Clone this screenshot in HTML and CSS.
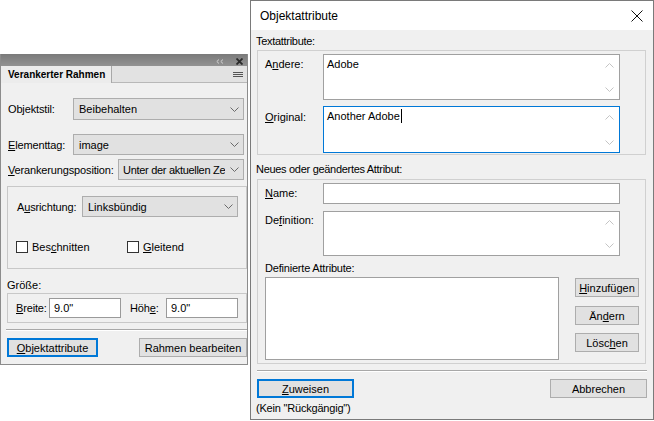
FILE: index.html
```html
<!DOCTYPE html>
<html>
<head>
<meta charset="utf-8">
<link rel="stylesheet" href="styles.css">
</head>
<body>
<div class="desk">

  <section class="panel">
    <div class="phead">
      <svg class="pcoll" width="8" height="5" viewBox="0 0 8 5"><path d="M3 0.5 L0.8 2.5 L3 4.5 M7 0.5 L4.8 2.5 L7 4.5" fill="none" stroke="#d0d0d0" stroke-width="1"/></svg>
      <svg class="pclose" width="7" height="7" viewBox="0 0 7 7"><path d="M0.5 0.5 L6.5 6.5 M6.5 0.5 L0.5 6.5" fill="none" stroke="#2a2a2a" stroke-width="1.8"/></svg>
    </div>
    <div class="ptabs">
      <div class="ptab">Verankerter Rahmen</div>
      <div class="pmenu"><span></span><span></span><span></span></div>
    </div>
    <div class="pbody">
      <div class="prow r1">
        <label class="plabel w66">Objektstil:</label>
        <div class="select w171"><span>Beibehalten</span><svg width="9" height="5" viewBox="0 0 9 5"><path d="M0.5 0.5 L4.5 4.5 L8.5 0.5" fill="none" stroke="#6a6a6a"/></svg></div>
      </div>
      <div class="prow r2">
        <label class="plabel w66"><u>E</u>lementtag:</label>
        <div class="select w171"><span>image</span><svg width="9" height="5" viewBox="0 0 9 5"><path d="M0.5 0.5 L4.5 4.5 L8.5 0.5" fill="none" stroke="#6a6a6a"/></svg></div>
      </div>
      <div class="prow r3">
        <label class="plabel w111"><u>V</u>erankerungsposition:</label>
        <div class="select w126 tight"><span>Unter der aktuellen Ze</span><svg width="9" height="5" viewBox="0 0 9 5"><path d="M0.5 0.5 L4.5 4.5 L8.5 0.5" fill="none" stroke="#6a6a6a"/></svg></div>
      </div>
      <div class="pgroup">
        <div class="prow ralign">
          <label class="plabel w66">A<u>u</u>srichtung:</label>
          <div class="select w155"><span>Linksbündig</span><svg width="9" height="5" viewBox="0 0 9 5"><path d="M0.5 0.5 L4.5 4.5 L8.5 0.5" fill="none" stroke="#6a6a6a"/></svg></div>
        </div>
        <div class="checks">
          <div class="check c1"><span class="box"></span><span>Bes<u>c</u>hnitten</span></div>
          <div class="check"><span class="box"></span><span><u>G</u>leitend</span></div>
        </div>
      </div>
      <div class="glabel">Größe:</div>
      <div class="sizebox">
        <label class="plabel w34"><u>B</u>reite:</label>
        <div class="input w72">9.0"</div>
        <label class="plabel w37 hl">Höh<u>e</u>:</label>
        <div class="input w72">9.0"</div>
      </div>
      <div class="sep psep"></div>
      <div class="pbtns">
        <div class="btn default w91"><u>O</u>bjektattribute</div>
        <div class="btn w107">Rahmen bearbeiten</div>
      </div>
    </div>
  </section>

  <section class="dialog">
    <header class="dtitle">
      <span>Objektattribute</span>
      <svg class="dclose" width="12" height="12" viewBox="0 0 12 12"><path d="M0.5 0.5 L11.5 11.5 M11.5 0.5 L0.5 11.5" fill="none" stroke="#111" stroke-width="1"/></svg>
    </header>
    <div class="dbody">
      <div class="dhead h1">Textattribute:</div>
      <div class="dgroup g1">
        <div class="drow">
          <label class="dlabel l1">A<u>n</u>dere:</label>
          <div class="tarea t1"><span class="ttext">Adobe</span>
            <div class="scroll">
              <svg width="9" height="5" viewBox="0 0 9 5"><path d="M0.5 4.5 L4.5 0.5 L8.5 4.5" fill="none" stroke="#c4c4c4"/></svg>
              <svg width="9" height="5" viewBox="0 0 9 5"><path d="M0.5 0.5 L4.5 4.5 L8.5 0.5" fill="none" stroke="#c4c4c4"/></svg>
            </div>
          </div>
        </div>
        <div class="drow mt6">
          <label class="dlabel l2"><u>O</u>riginal:</label>
          <div class="tarea t2 focus"><span class="ttext">Another Adobe<i class="caret"></i></span>
            <div class="scroll">
              <svg width="9" height="5" viewBox="0 0 9 5"><path d="M0.5 4.5 L4.5 0.5 L8.5 4.5" fill="none" stroke="#c4c4c4"/></svg>
              <svg width="9" height="5" viewBox="0 0 9 5"><path d="M0.5 0.5 L4.5 4.5 L8.5 0.5" fill="none" stroke="#c4c4c4"/></svg>
            </div>
          </div>
        </div>
      </div>
      <div class="dhead h2">Neues oder geändertes Attribut:</div>
      <div class="dgroup g2">
        <div class="drow">
          <label class="dlabel l3"><u>N</u>ame:</label>
          <div class="dinput"></div>
        </div>
        <div class="drow mt7">
          <label class="dlabel l4">De<u>f</u>inition:</label>
          <div class="tarea t3"><span class="ttext"></span>
            <div class="scroll">
              <svg width="9" height="5" viewBox="0 0 9 5"><path d="M0.5 4.5 L4.5 0.5 L8.5 4.5" fill="none" stroke="#c4c4c4"/></svg>
              <svg width="9" height="5" viewBox="0 0 9 5"><path d="M0.5 0.5 L4.5 4.5 L8.5 0.5" fill="none" stroke="#c4c4c4"/></svg>
            </div>
          </div>
        </div>
        <div class="dsub">Definierte Attribute:</div>
        <div class="listrow">
          <div class="listbox"></div>
          <div class="sidebtns">
            <div class="btn sbtn"><u>H</u>inzufügen</div>
            <div class="btn sbtn">Än<u>d</u>ern</div>
            <div class="btn sbtn">Lösc<u>h</u>en</div>
          </div>
        </div>
      </div>
      <div class="sep dsep"></div>
      <div class="dbtns">
        <div class="btn default w97"><u>Z</u>uweisen</div>
        <div class="btn w97">Abbrechen</div>
      </div>
      <div class="note">(Kein "Rückgängig")</div>
    </div>
  </section>

</div>
</body>
</html>
```

FILE: styles.css
```css
* { box-sizing: border-box; }
html, body { margin: 0; padding: 0; }
body {
  background: #ffffff;
  font-family: "Liberation Sans", Arial, sans-serif;
  font-size: 11px;
  color: #000;
}
u { text-decoration: underline; text-underline-offset: 1px; }
.desk { position: relative; width: 654px; height: 421px; overflow: hidden; }

/* ---------- floating panel ---------- */
.panel {
  position: absolute;
  left: 0; top: 54px;
  width: 248px; height: 311px;
  background: #f0f0f0;
  border: 1px solid #8c8c8c;
  border-top: none;
  display: flex; flex-direction: column;
}
.phead {
  height: 12px;
  background: linear-gradient(#7a7a7a, #929292);
  display: flex; align-items: center; justify-content: flex-end;
  gap: 12px; padding-right: 4px;
}
.pcoll { margin-top: 2px; }
.pclose { margin-top: 2px; }
.ptabs {
  height: 17px;
  background: #e2e2e2;
  display: flex; align-items: stretch;
  border-bottom: 1px solid #b8b8b8;
}
.ptab {
  width: 111px;
  background: #ececec;
  border-right: 1px solid #a8a8a8;
  margin-bottom: -1px;
  font-weight: bold; font-size: 10px;
  padding-left: 7px;
  display: flex; align-items: center;
}
.pmenu {
  margin-left: auto; margin-right: 4px;
  width: 10px;
  display: flex; flex-direction: column; justify-content: center; gap: 1px;
}
.pmenu span { height: 1px; background: #555; display: block; }
.pbody {
  padding-left: 6px;
  display: flex; flex-direction: column;
}
.prow { display: flex; align-items: center; }
.r1 { margin-top: 15px; height: 22px; }
.r2 { margin-top: 14px; height: 21px; }
.r3 { margin-top: 4px; height: 21px; }
.plabel { display: block; padding-left: 1px; letter-spacing: -0.15px; white-space: nowrap; }
.w66 { width: 66px; }
.w111 { width: 111px; }
.w34 { width: 34px; }
.w37 { width: 37px; }
.hl { margin-left: 8px; }
.select {
  height: 100%;
  background: #e1e1e1;
  border: 1px solid #adadad;
  display: flex; align-items: center; justify-content: space-between;
  padding: 0 4px 0 5px;
  white-space: nowrap; overflow: hidden;
}
.select span { overflow: hidden; }
.select svg { flex: none; margin-left: 4px; }
.select.tight { padding-left: 4px; }
.select.tight span { letter-spacing: -0.3px; }
.select.tight svg { margin-left: 2px; }
.w171 { width: 171px; }
.w126 { width: 126px; }
.w155 { width: 156px; }
.pgroup {
  margin-top: 6px;
  width: 240px; height: 83px;
  border: 1px solid #c8c8c8;
  padding: 9px 0 0 8px;
}
.ralign { height: 21px; }
.checks { display: flex; margin-top: 23px; height: 13px; align-items: center; }
.check { display: flex; align-items: center; gap: 4px; }
.c1 { width: 111px; }
.box {
  width: 12px; height: 12px;
  background: #fff; border: 1px solid #333;
  display: block;
}
.glabel { margin-top: 9px; height: 14px; line-height: 14px; }
.sizebox {
  margin-top: 1px;
  width: 240px; height: 30px;
  border: 1px solid #c8c8c8;
  padding: 4px 0 0 7px;
  display: flex; align-items: flex-start;
}
.sizebox .plabel { line-height: 20px; }
.input {
  height: 20px;
  background: #fff;
  border: 1px solid #9a9a9a;
  padding: 0 4px; line-height: 18px;
}
.w72 { width: 72px; }
.sep { height: 2px; border-top: 1px solid #a8a8a8; border-bottom: 1px solid #ffffff; }
.psep { margin-top: 6px; width: 241px; margin-left: -1px; }
.pbtns {
  margin-top: 7px;
  width: 240px;
  display: flex; justify-content: space-between;
}
.btn {
  height: 19px;
  background: #e1e1e1;
  border: 1px solid #adadad;
  display: flex; align-items: center; justify-content: center;
  white-space: nowrap;
}
.btn.default { border: 2px solid #0078d7; }
.w91 { width: 91px; }
.w107 { width: 108px; }

/* ---------- dialog ---------- */
.dialog {
  position: absolute;
  left: 250px; top: 0;
  width: 404px; height: 420px;
  border: 1px solid #7a7a7a;
  background: #f0f0f0;
  display: flex; flex-direction: column;
}
.dtitle {
  height: 29px;
  background: #fff;
  display: flex; align-items: center; justify-content: space-between;
  padding: 0 10px 0 9px;
  font-size: 12px;
}
.dbody { padding: 0 7px 0 5px; display: flex; flex-direction: column; }
.dhead { height: 14px; line-height: 14px; letter-spacing: -0.3px; }
.h1 { margin-top: 4px; }
.h2 { margin-top: 7px; }
.dgroup {
  margin-left: 1px;
  width: 389px;
  border: 1px solid #d0d0d0;
  padding: 3px 0 0 7px;
}
.g1 { margin-top: 2px; height: 105px; }
.g2 { margin-top: 3px; height: 185px; }
.drow { display: flex; align-items: flex-start; }
.mt6 { margin-top: 6px; }
.mt7 { margin-top: 7px; }
.dlabel { width: 58px; display: block; line-height: 14px; }
.l1 { padding-top: 3px; }
.l2 { padding-top: 4px; }
.l3 { padding-top: 3px; }
.l4 { padding-top: 2px; }
.tarea {
  width: 297px;
  background: #fff;
  border: 1px solid #a0a0a0;
  display: flex; justify-content: space-between;
}
.tarea.focus { border-color: #0078d7; }
.t1 { height: 46px; }
.t2 { height: 47px; }
.t3 { height: 45px; }
.ttext { padding: 2px 3px; line-height: 14px; display: flex; align-items: center; height: 18px; }
.caret { display: inline-block; width: 1px; height: 14px; background: #000; margin-left: 1px; }
.scroll {
  width: 19px;
  display: flex; flex-direction: column; justify-content: space-between; align-items: center;
  padding: 8px 0 7px;
}
.dinput {
  width: 297px; height: 21px;
  background: #fff;
  border: 1px solid #a0a0a0;
}
.dsub { margin-top: 5px; height: 14px; line-height: 14px; letter-spacing: -0.2px; }
.listrow { margin-top: 2px; display: flex; align-items: flex-start; }
.listbox {
  width: 294px; height: 83px;
  background: #fff;
  border: 1px solid #a0a0a0;
}
.sidebtns {
  margin-left: 16px; margin-top: 1px;
  display: flex; flex-direction: column; gap: 9px;
}
.sbtn { width: 64px; }
.sidebtns .sbtn:nth-child(2) { margin-bottom: -1px; }
.dsep { margin-top: 6px; width: 390px; margin-left: 1px; }
.dbtns {
  margin-top: 7px;
  margin-left: 1px;
  width: 390px;
  display: flex; justify-content: space-between;
}
.w97 { width: 97px; }
.note { margin-top: 3px; height: 14px; line-height: 14px; letter-spacing: -0.2px; }
```
